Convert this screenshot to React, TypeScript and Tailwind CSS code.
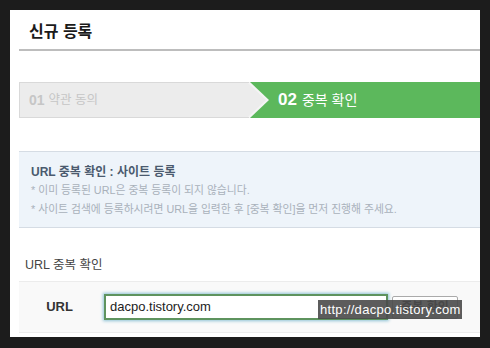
export default function App() {
  return (
    <div className="w-[490px] h-[348px] bg-[#1c1c1c] p-[10px] font-['Liberation_Sans','Noto_Sans_CJK_KR',sans-serif]">
      <div className="w-[470px] h-[327px] bg-white pl-[9px] overflow-hidden">
        {/* page title */}
        <h2 className="pl-[10px] pt-[12px] pb-[7px] leading-[20px] text-[16px] font-bold text-[#1a1a1a] border-b-2 border-[#bdbdbd]">
          신규 등록
        </h2>

        {/* steps */}
        <div className="relative mt-[31px] h-[36px] flex">
          <div className="w-[230px] h-full bg-[#ececec] border border-[#d9d9d9] border-r-0 flex items-center pl-[9px] text-[#c6c6c6]">
            <span className="text-[14px] font-bold mr-[4px]">01</span>
            <span className="text-[12.5px]">약관 동의</span>
          </div>
          <div className="flex-1 h-full bg-[#5cb85c] flex items-center pl-[29px] text-white">
            <span className="text-[17px] font-bold mr-[5px]">02</span>
            <span className="text-[14px]">중복 확인</span>
          </div>
          <svg className="absolute left-[226px] top-0" width="26" height="36" viewBox="0 0 26 36">
            <polygon points="0,0 5,0 24,18 5,36 0,36" fill="#f4f4f4" />
            <polygon points="0,1 3,1 21,18 3,35 0,35" fill="#ececec" />
            <line x1="0" y1="0.5" x2="4" y2="0.5" stroke="#d9d9d9" />
            <line x1="0" y1="35.5" x2="4" y2="35.5" stroke="#d9d9d9" />
          </svg>
        </div>

        {/* notice box */}
        <div className="mt-[33px] h-[77px] bg-[#eef4fa] border-y border-[#d5dce4] pl-[12px] pt-[11px]">
          <p className="leading-[18px] text-[12px] font-bold text-[#4a5a6e]">URL 중복 확인 : 사이트 등록</p>
          <p className="leading-[19px] text-[10.8px] text-[#a9b1ba]">* 이미 등록된 URL은 중복 등록이 되지 않습니다.</p>
          <p className="leading-[19px] text-[10.8px] text-[#a9b1ba]">
            * 사이트 검색에 등록하시려면 URL을 입력한 후 [중복 확인]을 먼저 진행해 주세요.
          </p>
        </div>

        {/* form */}
        <p className="mt-[28px] pl-[6px] leading-[18px] text-[12.5px] text-[#444]">URL 중복 확인</p>
        <div className="relative mt-[7px] h-[52px] bg-[#f9f9f9] border-y border-[#ececec] flex items-center">
          <div className="w-[81px] text-center text-[13px] font-bold text-[#333]">URL</div>
          <div className="ml-[4px] w-[284px] h-[26px] bg-white border-2 border-[#5e935e] shadow-[0_0_3px_1px_#8ec3d6] flex items-center pl-[4px] text-[13px] text-[#222]">
            dacpo.tistory.com
          </div>
          <button className="ml-[4px] w-[66px] h-[23px] border border-[#aaa] rounded-[2px] bg-gradient-to-b from-white to-[#ececec] text-[12px] font-bold text-[#333]">
            중복 확인
          </button>
          {/* url tooltip */}
          <div className="absolute left-[299px] top-[18px] w-[144px] h-[19px] bg-[#4a4a4a]/90 text-white text-[13px] tracking-[0.3px] leading-[19px] pl-[2px] whitespace-nowrap">
            http://dacpo.tistory.com
          </div>
        </div>
      </div>
    </div>
  );
}
